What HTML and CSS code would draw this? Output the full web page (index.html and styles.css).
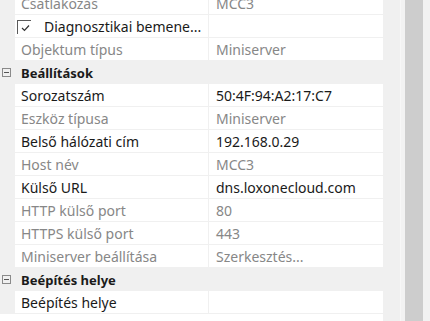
FILE: index.html
```html
<!DOCTYPE html>
<html>
<head>
    <title>Tulajdonságok</title>
    <link rel="stylesheet" href="styles.css">
</head>
<body>

<div class="panel">
    <div class="grid">
        <div class="row off"><span class="gut"></span><span class="name">Csatlakozás</span><span class="val">MCC3</span></div>
        <div class="row"><span class="gut"></span><span class="name check"><b class="box"><svg width="9" height="8" viewBox="0 0 9 8"><path d="M1 4 L3.5 6.5 L8 1.5" fill="none" stroke="#333" stroke-width="1.2"/></svg></b><em class="label">Diagnosztikai bemene...</em></span><span class="val"></span></div>
        <div class="row off"><span class="gut"></span><span class="name">Objektum típus</span><span class="val">Miniserver</span></div>
        <div class="row head"><span class="gut"><i class="minus"></i></span><span class="name">Beállítások</span><span class="val"></span></div>
        <div class="row"><span class="gut"></span><span class="name">Sorozatszám</span><span class="val">50:4F:94:A2:17:C7</span></div>
        <div class="row off"><span class="gut"></span><span class="name">Eszköz típusa</span><span class="val">Miniserver</span></div>
        <div class="row"><span class="gut"></span><span class="name">Belső hálózati cím</span><span class="val">192.168.0.29</span></div>
        <div class="row off"><span class="gut"></span><span class="name">Host név</span><span class="val">MCC3</span></div>
        <div class="row"><span class="gut"></span><span class="name">Külső URL</span><span class="val">dns.loxonecloud.com</span></div>
        <div class="row off"><span class="gut"></span><span class="name">HTTP külső port</span><span class="val">80</span></div>
        <div class="row off"><span class="gut"></span><span class="name">HTTPS külső port</span><span class="val">443</span></div>
        <div class="row off"><span class="gut"></span><span class="name">Miniserver beállítása</span><span class="val">Szerkesztés...</span></div>
        <div class="row head"><span class="gut"><i class="minus"></i></span><span class="name">Beépítés helye</span><span class="val"></span></div>
        <div class="row"><span class="gut"></span><span class="name">Beépítés helye</span><span class="val"></span></div>
    </div>
    <div class="side"></div>
    <div class="scroll"><div class="thumb"></div></div>
</div>

</body>
</html>
```

FILE: styles.css
```css
html, body {
    margin: 0;
    height: 100%;
    overflow: hidden;
    background: #fff;
}
.panel {
    display: flex;
    height: 321px;
    font-family: "Noto Sans", sans-serif;
    font-size: 14px;
    color: #1a1a1a;
}
.grid {
    width: 383px;
    margin-top: -8px;
}
.row {
    display: grid;
    grid-template-columns: 15px 193px 175px;
    height: 23px;
}
.row > span {
    box-sizing: border-box;
    display: flex;
    align-items: center;
    white-space: nowrap;
    overflow: hidden;
}
.gut {
    background: #f0f0f0;
    justify-content: center;
}
.name {
    padding-left: 6px;
    border-bottom: 1px solid #f0f0f0;
}
.val {
    padding-left: 7px;
    border-left: 1px solid #f0f0f0;
    border-bottom: 1px solid #f0f0f0;
}
.off .name, .off .val {
    color: #878787;
}
.head > span {
    background: #f0f0f0;
    border: none;
    font-weight: bold;
    font-size: 13px;
}
.row > .check {
    display: grid;
    grid-template-columns: 13px auto;
    column-gap: 14px;
    padding-left: 2px;
}
.box {
    box-sizing: border-box;
    width: 14px;
    height: 14px;
    margin-top: 1px;
    border-top: 1px solid #5a5a5a;
    border-left: 1px solid #5a5a5a;
    display: flex;
    align-items: center;
    justify-content: center;
    padding: 2px 0 0 2px;
}
.label {
    font-style: normal;
}
.minus {
    flex-shrink: 0;
    box-sizing: border-box;
    width: 9px;
    height: 9px;
    border: 1px solid #8a8a8a;
    position: relative;
    margin-left: -3px;
}
.minus::after {
    content: "";
    position: absolute;
    left: 1px;
    right: 1px;
    top: 3px;
    height: 1px;
    background: #555;
}
.side {
    width: 19px;
    background: #f0f0f0;
}
.scroll {
    width: 28px;
    background: #f2f2f2;
    padding-left: 4px;
    border-left: 1px solid #f7f7f7;
}
.thumb {
    width: 18px;
    height: 100%;
    background: #cdcdcd;
}
```
